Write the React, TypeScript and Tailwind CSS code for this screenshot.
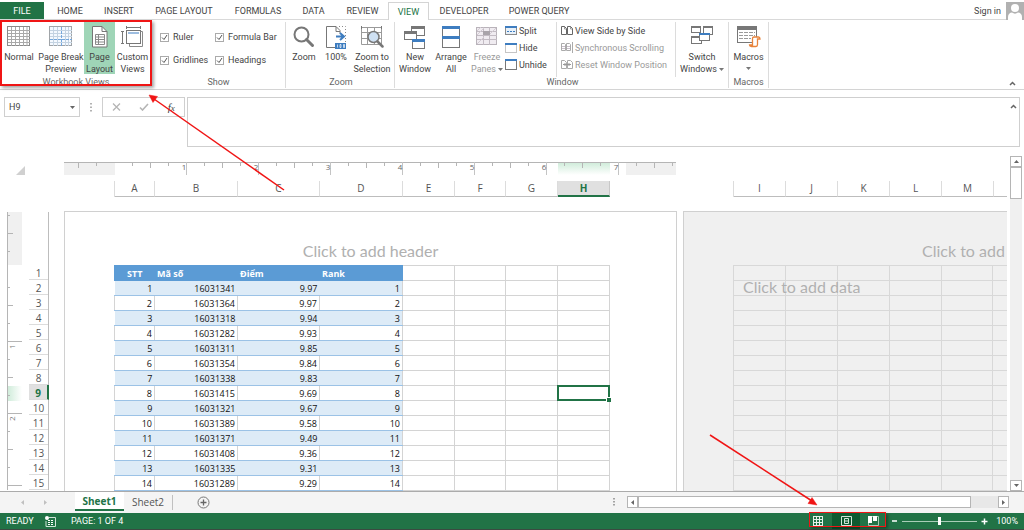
import React, { useState } from "react";
import type { ReactNode } from "react";

/* ---------- icons ---------- */

function Svg({ w, h, children }: { w: number; h: number; children: ReactNode }) {
  return (
    <svg width={w} height={h} viewBox={`0 0 ${w} ${h}`} fill="none" aria-hidden="true" className="shrink-0">
      {children}
    </svg>
  );
}

const NormalIcon = () => (
  <Svg w={24} h={22}>
    <rect x="0.5" y="0.5" width="22" height="19" fill="#fff" stroke="#8a8a8a" />
    <path d="M4.5 1v19M8.5 1v19M12.5 1v19M16.5 1v19M20 1v19M1 4.5h22M1 7.5h22M1 10.5h22M1 13.5h22M1 16.5h22" stroke="#a9a9a9" />
  </Svg>
);

const PageBreakIcon = () => (
  <Svg w={24} h={22}>
    <rect x="0.5" y="0.5" width="22" height="19" fill="#f4f9ff" stroke="#a0a4a8" />
    <path d="M4.5 1v19M8.5 1v19M16.5 1v19M19.5 1v19M1 4.5h22M1 7.5h22M1 10.5h22M1 16.5h22" stroke="#c4d3e2" />
    <path d="M12.5 1v19M1 13.5h22" stroke="#74a7dc" strokeDasharray="3 1" />
  </Svg>
);

const PageLayoutIcon = () => (
  <Svg w={18} h={22}>
    <path d="M1.500 0.500h9.500l5 5v15.500h-14.500z" fill="#fff" stroke="#777" />
    <path d="M11 0.500v5h5" stroke="#777" />
    <path d="M4.500 8.500h9v10h-9zM7.500 8.500v10M4.500 11h9M4.500 13.500h9M4.500 16h9" stroke="#8a8a8a" />
  </Svg>
);

const CustomViewsIcon = () => (
  <Svg w={24} h={22}>
    <path d="M5 1.500h15M5.500 0v3M19.500 0v3M1.500 5v13M0 5.500h3M0 17.500h3" stroke="#777" />
    <rect x="5.500" y="4.500" width="14" height="13" fill="#fff" stroke="#777" />
    <rect x="7" y="6" width="11" height="2" fill="#9dbde0" />
    <path d="M8.500 18v2.500h13v-15h-2" stroke="#8a8a8a" />
  </Svg>
);

const ZoomIcon = () => (
  <Svg w={24} h={22}>
    <circle cx="9.500" cy="8.500" r="7" stroke="#777" strokeWidth="2" fill="#fff" />
    <path d="M14.500 13.500l6 6" stroke="#777" strokeWidth="3" strokeLinecap="round" />
  </Svg>
);

const HundredIcon = () => (
  <Svg w={22} h={24}>
    <path d="M10 21.500H1.500V0.500h9.500l4 4v3" stroke="#777" />
    <path d="M11 0.500v5h4" stroke="#777" />
    <path d="M14 0.500h6.500v16" stroke="#8a8a8a" strokeDasharray="1 2" />
    <path d="M11 10.500h7M15 7l4 3.500-4 3.500" stroke="#3e7dc0" strokeWidth="2" />
    <rect x="10" y="17" width="11" height="6" fill="#3e7dc0" />
    <path d="M12.500 18.500v3M15 18.500h1v3h-1zM18.500 18.500h1v3h-1z" stroke="#fff" strokeWidth="0.700" />
  </Svg>
);

const ZoomSelectionIcon = () => (
  <Svg w={24} h={23}>
    <path d="M1.500 1.500h20v17h-20zM1 6.500h21M1 12.500h21M7.500 1v18M14.500 1v18" stroke="#9a9a9a" />
    <path d="M1.500 0v3M21.500 0v3" stroke="#777" />
    <circle cx="13.500" cy="11" r="5.500" fill="#cfe1f3" stroke="#777" strokeWidth="1.500" />
    <path d="M17.500 15.500l5 5" stroke="#777" strokeWidth="2.500" strokeLinecap="round" />
  </Svg>
);

const NewWindowIcon = () => (
  <Svg w={22} h={24}>
    <rect x="7.500" y="0.500" width="13" height="9" fill="#fff" stroke="#777" />
    <rect x="7" y="0" width="14" height="3" fill="#777" />
    <rect x="0.500" y="5.500" width="12" height="8" fill="#fff" stroke="#777" />
    <rect x="0" y="5" width="13" height="3" fill="#777" />
    <rect x="8.500" y="13.500" width="12" height="9" fill="#fff" stroke="#777" />
    <rect x="8" y="13" width="13" height="3" fill="#3e7dc0" />
  </Svg>
);

const ArrangeIcon = () => (
  <Svg w={20} h={23}>
    <rect x="1.500" y="0.500" width="17" height="21" fill="#fff" stroke="#777" />
    <rect x="1" y="0" width="18" height="3" fill="#3e7dc0" />
    <rect x="1" y="10" width="18" height="3" fill="#3e7dc0" />
  </Svg>
);

const FreezeIcon = () => (
  <Svg w={22} h={22}>
    <rect x="0.500" y="1.500" width="20" height="17" fill="#f0ecf1" stroke="#b9b3ba" />
    <path d="M1 5.500h20M1 9.500h20M1 13.500h20M7.500 1v18M13.500 1v18" stroke="#c3bcc4" />
    <path d="M1 9l7-7M1 5l4-4M13 9l7-7M1 18l7-7" stroke="#d3ccd4" />
    <rect x="7" y="5" width="7" height="4" fill="#a9a4aa" />
  </Svg>
);

const SwitchIcon = () => (
  <Svg w={22} h={20}>
    <rect x="0.500" y="0.500" width="9" height="6" fill="#fff" stroke="#777" />
    <rect x="0" y="0" width="10" height="2" fill="#777" />
    <rect x="12.500" y="0.500" width="9" height="8" fill="#fff" stroke="#777" />
    <rect x="12" y="0" width="10" height="2" fill="#777" />
    <rect x="0.500" y="10.500" width="10" height="7" fill="#fff" stroke="#777" />
    <rect x="0" y="10" width="11" height="2" fill="#777" />
    <rect x="8.500" y="7.500" width="10" height="7" fill="#fff" stroke="#777" />
    <rect x="8" y="7" width="11" height="2" fill="#3e7dc0" />
  </Svg>
);

const MacrosIcon = () => (
  <Svg w={24} h={22}>
    <rect x="0.500" y="0.500" width="19" height="16" fill="#fff" stroke="#777" />
    <rect x="0" y="0" width="20" height="4" fill="#777" />
    <path d="M2 6.500h16M2 9.500h16M2 12.500h12" stroke="#9a9a9a" strokeDasharray="4 1" />
    <path
      d="M15.500 19v-6.500c0-1 0.500-1.500 1.500-1.500h4.500c1 0 1.500 0.500 1.500 2h-2.500v5.500c0 1-0.500 2-1.500 2h-4.500c-1.500 0-2-0.500-2-1.500z"
      fill="#fff"
      stroke="#e8833a"
      strokeWidth="1.300"
    />
  </Svg>
);

const SplitIcon = () => (
  <Svg w={12} h={10}>
    <rect x="0.500" y="0.500" width="11" height="8" fill="#e7f0f9" stroke="#8a8a8a" />
    <rect width="12" height="2" fill="#3e7dc0" />
    <path d="M2 5.500h8" stroke="#3e7dc0" strokeDasharray="2 1" />
  </Svg>
);

const HideIcon = () => (
  <Svg w={12} h={10}>
    <rect x="0.500" y="0.500" width="11" height="9" stroke="#8a8a8a" strokeDasharray="1 1" />
    <rect width="12" height="2" fill="#3e7dc0" />
  </Svg>
);

const UnhideIcon = () => (
  <Svg w={12} h={11}>
    <rect x="0.500" y="0.500" width="11" height="10" fill="#fff" stroke="#777" />
    <rect width="12" height="2" fill="#3e7dc0" />
  </Svg>
);

const SideBySideIcon = () => (
  <Svg w={12} h={9}>
    <path d="M0.500 0.500h3l2 2v6h-5zM6.500 0.500h3l2 2v6h-5z" fill="#fff" stroke="#666" />
    <path d="M3.500 0v3h2M9.500 0v3h2" stroke="#777" strokeWidth="0.700" />
  </Svg>
);

const SyncScrollIcon = () => (
  <Svg w={12} h={11}>
    <path d="M0.500 1.500h3l1 1v6h-4zM5.500 1.500h3l1 1v6h-4zM11.500 0v11" stroke="#aaa" />
    <path d="M1 4.500h3M1 6.500h3M6 4.500h3M6 6.500h3" stroke="#c8bfca" />
  </Svg>
);

const ResetWindowIcon = () => (
  <Svg w={12} h={9}>
    <path d="M0.500 0.500h3l2 2v6h-5zM6.500 0.500h3l2 2v6h-5z" stroke="#aaa" />
    <path d="M2 4.500h8M4 3v3M8 3v3" stroke="#999" />
  </Svg>
);

const Caret = ({ className = "" }: { className?: string }) => (
  <svg width="5" height="3" viewBox="0 0 5 3" className={className} aria-hidden="true">
    <path d="M0 0h5L2.500 3z" fill="currentColor" />
  </svg>
);

/* ---------- ribbon ---------- */

const TABS = [
  { name: "HOME", width: "w-[52px]" },
  { name: "INSERT", width: "w-[46px]" },
  { name: "PAGE LAYOUT", width: "w-[84px]" },
  { name: "FORMULAS", width: "w-[64px]" },
  { name: "DATA", width: "w-[47px]" },
  { name: "REVIEW", width: "w-[51px]" },
  { name: "VIEW", width: "w-[41px]" },
  { name: "DEVELOPER", width: "w-[70px]" },
  { name: "POWER QUERY", width: "w-[80px]" },
];

function TabBar() {
  return (
    <nav className="flex h-5 items-stretch border-b border-[#d9d9d9] pt-[2px]">
      <button className="w-11 bg-[#217346] text-white">FILE</button>
      {TABS.map((t) => (
        <button
          key={t.name}
          className={`${t.width} whitespace-nowrap ${
            t.name === "VIEW" ? "-mb-px border border-b-0 border-[#d4d4d4] bg-white text-[#217346]" : ""
          }`}
        >
          {t.name}
        </button>
      ))}
      <div className="ml-auto flex items-center gap-[5px]">
        <button>Sign in</button>
        <svg width="18" height="18" viewBox="0 0 18 18" aria-hidden="true">
          <rect width="18" height="18" fill="#b1b1b1" />
          <circle cx="9" cy="6" r="4" fill="#fff" />
          <path d="M2 18v-3c0-3 2-4.500 4-4.500 2 1.500 4 1.500 6 0 2 0 4 1.500 4 4.500v3z" fill="#fff" />
        </svg>
      </div>
    </nav>
  );
}

function Group({ label, className, children }: { label: string; className: string; children: ReactNode }) {
  return (
    <section className={`relative flex shrink-0 flex-col ${className}`}>
      <div className="flex h-14">{children}</div>
      <div className="text-center leading-[11px] text-[#666]">{label}</div>
    </section>
  );
}

interface BigProps {
  icon: ReactNode;
  lines: string[];
  width: string;
  active?: boolean;
  disabled?: boolean;
  menu?: boolean;
}

function BigButton({ icon, lines, width, active, disabled, menu }: BigProps) {
  return (
    <button
      disabled={disabled}
      className={`flex h-[52px] shrink-0 flex-col items-center whitespace-nowrap pt-1 leading-3 ${width} ${
        active ? "bg-[#9fd5b7]" : ""
      } ${disabled ? "text-[#999]" : ""}`}
    >
      <span className="flex h-[25px] shrink-0 items-start">{icon}</span>
      {lines.map((line, i) => (
        <span key={line} className="flex items-center gap-[2px]">
          {line}
          {menu && i === lines.length - 1 && lines.length > 1 && <Caret className="text-[#777]" />}
        </span>
      ))}
      {menu && lines.length === 1 && <Caret className="mt-1 text-[#777]" />}
    </button>
  );
}

function SmallButton({ icon, label, disabled }: { icon: ReactNode; label: string; disabled?: boolean }) {
  return (
    <button
      disabled={disabled}
      className={`flex h-[17px] items-center gap-[2px] whitespace-nowrap ${disabled ? "text-[#999]" : ""}`}
    >
      {icon}
      {label}
    </button>
  );
}

function Check({ label }: { label: string }) {
  return (
    <label className="flex items-center gap-1 whitespace-nowrap">
      <span className="grid">
        <input
          type="checkbox"
          defaultChecked
          className="peer size-[9px] appearance-none border border-[#ababab] bg-white [grid-area:1/1]"
        />
        <svg
          width="9"
          height="9"
          viewBox="0 0 9 9"
          aria-hidden="true"
          className="pointer-events-none hidden [grid-area:1/1] peer-checked:block"
        >
          <path d="M2 4.500l2 2 3-4.500" fill="none" stroke="#555" />
        </svg>
      </span>
      {label}
    </label>
  );
}

function Ribbon() {
  return (
    <div className="flex h-[70px] border-b border-[#d4d4d4] pt-[2px] pb-px">
      <Group label="Workbook Views" className="w-[152px]">
        <BigButton icon={<NormalIcon />} lines={["Normal"]} width="w-[38px]" />
        <BigButton icon={<PageBreakIcon />} lines={["Page Break", "Preview"]} width="w-[46px]" />
        <BigButton icon={<PageLayoutIcon />} lines={["Page", "Layout"]} width="w-[31px]" active />
        <BigButton icon={<CustomViewsIcon />} lines={["Custom", "Views"]} width="w-[35px]" />
        <span className="pointer-events-none absolute -top-[2px] left-0 h-[66px] w-full border-2 border-[#f01515] shadow-[2px_2px_3px_rgba(0,0,0,0.35)]" />
      </Group>
      <Group label="Show" className="w-[134px] border-r border-[#dcdcdc]">
        <div className="grid grid-cols-[55px_auto] content-start gap-y-[11px] pt-[9px] pl-2 leading-3">
          <Check label="Ruler" />
          <Check label="Formula Bar" />
          <Check label="Gridlines" />
          <Check label="Headings" />
        </div>
      </Group>
      <Group label="Zoom" className="w-[109px] border-r border-[#dcdcdc] pl-[2px]">
        <BigButton icon={<ZoomIcon />} lines={["Zoom"]} width="w-8" />
        <BigButton icon={<HundredIcon />} lines={["100%"]} width="w-8" />
        <BigButton icon={<ZoomSelectionIcon />} lines={["Zoom to", "Selection"]} width="w-10" />
      </Group>
      <Group label="Window" className="w-[334px] border-r border-[#dcdcdc] pl-[2px]">
        <BigButton icon={<NewWindowIcon />} lines={["New", "Window"]} width="w-9" />
        <BigButton icon={<ArrangeIcon />} lines={["Arrange", "All"]} width="w-9" />
        <BigButton icon={<FreezeIcon />} lines={["Freeze", "Panes"]} width="w-9" disabled menu />
        <div className="flex w-[52px] flex-col border-r border-[#dcdcdc]">
          <SmallButton icon={<SplitIcon />} label="Split" />
          <SmallButton icon={<HideIcon />} label="Hide" />
          <SmallButton icon={<UnhideIcon />} label="Unhide" />
        </div>
        <div className="flex w-[119px] flex-col border-r border-[#dcdcdc] pl-1">
          <SmallButton icon={<SideBySideIcon />} label="View Side by Side" />
          <SmallButton icon={<SyncScrollIcon />} label="Synchronous Scrolling" disabled />
          <SmallButton icon={<ResetWindowIcon />} label="Reset Window Position" disabled />
        </div>
        <BigButton icon={<SwitchIcon />} lines={["Switch", "Windows"]} width="w-[52px]" menu />
      </Group>
      <Group label="Macros" className="w-10 border-r border-[#dcdcdc]">
        <BigButton icon={<MacrosIcon />} lines={["Macros"]} width="w-[39px]" menu />
      </Group>
      <button aria-label="Collapse ribbon" className="mr-2 mb-[2px] ml-auto self-end">
        <Svg w={7} h={5}>
          <path d="M1 4l2.500-2.500L6 4" stroke="#666" strokeWidth="1.500" />
        </Svg>
      </button>
    </div>
  );
}

/* ---------- formula bar ---------- */

function FormulaBar() {
  return (
    <div className="flex items-start pt-[7px] pr-1 pl-1">
      <div className="flex h-5 w-[76px] items-center border border-[#cfcfcf] pr-1">
        <input aria-label="Name box" defaultValue="H9" className="min-w-0 flex-1 pl-1 outline-none" />
        <button aria-label="Show names" className="text-[#666]">
          <Caret />
        </button>
      </div>
      <span className="flex h-5 w-[22px] items-center justify-center">
        <Svg w={2} h={9}>
          <path d="M1 0v9" stroke="#999" strokeWidth="1.500" strokeDasharray="1.500 2" />
        </Svg>
      </span>
      <div className="flex h-5 w-[83px] items-center justify-around border border-[#cfcfcf]">
        <button aria-label="Cancel">
          <Svg w={9} h={8}>
            <path d="M1 0.500l7 7M8 0.500l-7 7" stroke="#b5b5b5" strokeWidth="1.300" />
          </Svg>
        </button>
        <button aria-label="Enter">
          <Svg w={10} h={8}>
            <path d="M1 4.500l2.500 2.500L9 1" stroke="#b5b5b5" strokeWidth="1.600" />
          </Svg>
        </button>
        <button aria-label="Insert function" className="font-['Liberation_Serif',serif] text-[11px] text-[#444] italic">
          f<span className="text-[9px]">x</span>
        </button>
      </div>
      <div className="ml-[2px] flex h-[50px] flex-1 items-start border border-[#cfcfcf]">
        <textarea aria-label="Formula" className="h-full flex-1 resize-none px-1 outline-none" />
        <button aria-label="Collapse formula bar" className="mt-[6px] mr-[2px]">
          <Svg w={7} h={5}>
            <path d="M1 4l2.500-2.500L6 4" stroke="#666" strokeWidth="1.500" />
          </Svg>
        </button>
      </div>
    </div>
  );
}

/* ---------- worksheet ---------- */

const COLUMNS_1 = [
  { name: "A", width: "w-10" },
  { name: "B", width: "w-[83px]" },
  { name: "C", width: "w-[82px]" },
  { name: "D", width: "w-[83px]" },
  { name: "E", width: "w-[52px]" },
  { name: "F", width: "w-[51px]" },
  { name: "G", width: "w-[52px]" },
  { name: "H", width: "w-[52px]" },
];

const COLUMNS_2 = ["I", "J", "K", "L", "M"];

const RECORDS: [string, string][] = [
  ["16031341", "9.97"],
  ["16031364", "9.97"],
  ["16031318", "9.94"],
  ["16031282", "9.93"],
  ["16031311", "9.85"],
  ["16031354", "9.84"],
  ["16031338", "9.83"],
  ["16031415", "9.69"],
  ["16031321", "9.67"],
  ["16031389", "9.58"],
  ["16031371", "9.49"],
  ["16031408", "9.36"],
  ["16031335", "9.31"],
  ["16031289", "9.29"],
];

const ROW_NUMBERS = Array.from({ length: 15 }, (_, i) => i + 1);

function HorizontalRuler() {
  const ticks: ReactNode[] = [];
  for (let x = 15; x < 612; x += 18) {
    const steps = (x - 51) / 18;
    const inch = steps > 0 && steps % 4 === 0;
    const half = Math.abs(steps) % 2 === 0;
    if (steps === 0) continue;
    ticks.push(<path key={x} d={`M${x - 0.5} 0v${inch ? 13 : half ? 6 : 4}`} stroke={inch ? "#c4c4c4" : "#b5b5b5"} />);
  }
  return (
    <svg width="612" height="13" viewBox="0 0 612 13" aria-hidden="true" className="block shrink-0">
      <defs>
        <linearGradient id="hmark" x1="0" y1="0" x2="0" y2="1">
          <stop offset="0" stopColor="#cdebd8" />
          <stop offset="1" stopColor="#fff" />
        </linearGradient>
      </defs>
      <rect width="51" height="13" fill="#f0f0f0" />
      <rect x="562" width="50" height="13" fill="#f0f0f0" />
      <rect x="494" width="52" height="13" fill="url(#hmark)" />
      <path d="M0 0.500h612" stroke="#b5b5b5" />
      {ticks}
      {[1, 2, 3, 4, 5, 6, 7].map((n) => (
        <text key={n} x={48 + n * 72} y="8" fontSize="8" textAnchor="middle" fill="#666">
          {n}
        </text>
      ))}
    </svg>
  );
}

function VerticalRuler() {
  const ticks: ReactNode[] = [];
  for (let i = -3; i <= 12; i++) {
    if (i === 0) continue;
    const y = 57 + i * 18;
    const inch = i > 0 && i % 4 === 0;
    const len = inch ? 15 : Math.abs(i) % 2 === 0 ? 6 : 3;
    ticks.push(<path key={i} d={`M0 ${y + 0.5}h${len}`} stroke="#b5b5b5" />);
  }
  return (
    <svg width="15" height="278" viewBox="0 0 15 278" aria-hidden="true" className="block">
      <defs>
        <linearGradient id="vmark">
          <stop offset="0" stopColor="#cdebd8" />
          <stop offset="1" stopColor="#fff" />
        </linearGradient>
      </defs>
      <rect width="15" height="53" fill="#f0f0f0" />
      <rect y="174" width="15" height="15" fill="url(#vmark)" />
      <path d="M0.500 0v278" stroke="#b5b5b5" />
      {ticks}
      <text transform="translate(8 137) rotate(-90)" fontSize="8" fill="#777">1</text>
      <text transform="translate(8 209) rotate(-90)" fontSize="8" fill="#777">2</text>
    </svg>
  );
}

function ColumnHead({ name, width, active }: { name: string; width: string; active?: boolean }) {
  return (
    <div
      className={`h-4 shrink-0 border-r text-center text-[10px] leading-[15px] ${width} ${
        active
          ? "border-b-2 border-r-[#c8c8c8] border-b-[#217346] bg-[#e0e0e0] font-bold text-[#217346]"
          : "border-b border-r-[#dcdcdc] border-b-[#bdbdbd] text-[#555]"
      }`}
    >
      {name}
    </div>
  );
}

function DataSheet() {
  return (
    <table className="w-[495px] table-fixed border-collapse text-[#111]">
      <colgroup>
        {COLUMNS_1.map((c) => (
          <col key={c.name} className={c.width} />
        ))}
      </colgroup>
      <thead>
        <tr className="h-[15px] text-left leading-3 text-white">
          <th className="border border-[#5b9bd5] bg-[#5b9bd5] p-0 pt-[2px] pl-3">STT</th>
          <th className="border border-[#5b9bd5] bg-[#5b9bd5] p-0 pt-[2px] pl-[2px]">Mã số</th>
          <th className="border border-[#5b9bd5] bg-[#5b9bd5] p-0 pt-[2px] pl-[2px]">Điểm</th>
          <th className="border border-[#5b9bd5] bg-[#5b9bd5] p-0 pt-[2px] pl-[2px]">Rank</th>
          {[0, 1, 2, 3].map((k) => (
            <td key={k} className="border border-[#d4d4d4] p-0" />
          ))}
        </tr>
      </thead>
      <tbody>
        {RECORDS.map(([code, score], i) => {
          const cell =
            i % 2 === 0
              ? "border-y border-[#9bc2e6] bg-[#ddebf7] p-0 pt-[2px] pr-[2px]"
              : "border-x border-y border-x-[#d4d4d4] border-y-[#9bc2e6] p-0 pt-[2px] pr-[2px]";
          return (
            <tr key={code} className="h-[15px] text-right leading-3">
              <td className={cell}>{i + 1}</td>
              <td className={cell}>{code}</td>
              <td className={cell}>{score}</td>
              <td className={cell}>{i + 1}</td>
              {[0, 1, 2, 3].map((k) => (
                <td key={k} className="relative border border-[#d4d4d4] p-0">
                  {k === 3 && i === 7 && (
                    <span className="absolute -inset-px border-2 border-[#217346]">
                      <span className="absolute -right-[3px] -bottom-[3px] size-[5px] border-t border-l border-white bg-[#217346]" />
                    </span>
                  )}
                </td>
              ))}
            </tr>
          );
        })}
      </tbody>
    </table>
  );
}

const PLACEHOLDER = "font-['Lato','Noto_Sans',sans-serif] text-base leading-5 text-[#b0b0b0]";

function Worksheet() {
  return (
    <main className="flex flex-1 font-['Open_Sans','Noto_Sans',sans-serif]">
      <div className="w-16 shrink-0">
        <div className="flex h-[65px] items-start pt-[19px] pl-4">
          <button aria-label="Select all">
            <Svg w={9} h={9}>
              <path d="M9 0v9H0z" fill="#d0d0d0" />
            </Svg>
          </button>
        </div>
        <div className="flex pl-[7px]">
          <VerticalRuler />
          <div className="ml-[7px] w-5 border-r border-[#bdbdbd] pt-[53px]">
            {ROW_NUMBERS.map((n) => (
              <div
                key={n}
                className={`h-[15px] border-b border-[#dcdcdc] text-center text-[10px] leading-[17px] ${
                  n === 9 ? "-mr-px border-r-2 border-r-[#217346] bg-[#e0e0e0] font-bold text-[#217346]" : "text-[#555]"
                }`}
              >
                {n}
              </div>
            ))}
          </div>
        </div>
      </div>

      <div className="flex min-w-0 flex-1 flex-col overflow-hidden pt-[15px]">
        <HorizontalRuler />
        <div className="mt-[6px] flex pl-[50px]">
          <div className="flex border-l border-[#dcdcdc]">
            {COLUMNS_1.map((c) => (
              <ColumnHead key={c.name} name={c.name} width={c.width} active={c.name === "H"} />
            ))}
          </div>
          <div className="ml-[123px] flex flex-1 border-l border-[#dcdcdc]">
            {COLUMNS_2.map((c) => (
              <ColumnHead key={c} name={c} width="w-[52px]" />
            ))}
            <div className="flex-1 border-b border-[#bdbdbd]" />
          </div>
        </div>

        <div className="mt-[14px] flex flex-1 gap-[6px]">
          <div className="w-[613px] shrink-0 border border-b-0 border-[#d0d0d0] bg-white">
            <div className={`flex h-[53px] items-end justify-center pb-1 ${PLACEHOLDER}`}>Click to add header</div>
            <div className="pl-[49px]">
              <DataSheet />
            </div>
          </div>
          <div className="w-[613px] shrink-0 border border-b-0 border-[#d0d0d0] bg-[#f0f0f0]">
            <div className={`flex h-[53px] items-end pb-1 pl-[238px] ${PLACEHOLDER}`}>Click to add</div>
            <div className="relative pl-[49px]">
              <table className="w-[520px] table-fixed border-collapse">
                <tbody>
                  {ROW_NUMBERS.map((n) => (
                    <tr key={n} className="h-[15px]">
                      {Array.from({ length: 10 }, (_, k) => (
                        <td key={k} className="border border-[#d8d8d8] p-0" />
                      ))}
                    </tr>
                  ))}
                </tbody>
              </table>
              <span className={`absolute top-3 left-[59px] ${PLACEHOLDER}`}>Click to add data</span>
            </div>
          </div>
        </div>
      </div>

      <div className="flex w-[17px] shrink-0 flex-col pt-[9px] pr-[2px] pl-[3px]">
        <button aria-label="Scroll up" className="flex h-[11px] items-center justify-center border border-[#b5b5b5] bg-white text-[#666]">
          <Caret className="rotate-180" />
        </button>
        <div className="h-8 border border-[#b5b5b5] bg-white" />
        <div className="flex-1 bg-[#f0f0f0]" />
        <button aria-label="Scroll down" className="flex h-[11px] items-center justify-center border border-[#b5b5b5] bg-white text-[#666]">
          <Caret />
        </button>
      </div>
    </main>
  );
}

function SheetTabs() {
  return (
    <div className="flex h-[22px] items-start border-t border-[#ababab] bg-[#f4f4f4] font-['Open_Sans','Noto_Sans',sans-serif] text-[10px]">
      <div className="flex h-5 w-[75px] items-center gap-[18px] pl-5 text-[#c0c0c0]">
        <button aria-label="Previous sheet">
          <Caret className="rotate-90" />
        </button>
        <button aria-label="Next sheet">
          <Caret className="-rotate-90" />
        </button>
      </div>
      <button className="h-[19px] w-[49px] border-b-2 border-[#217346] bg-white pt-px leading-4 font-bold text-[#217346]">
        Sheet1
      </button>
      <button className="h-[19px] w-12 leading-[18px] text-[#555]">Sheet2</button>
      <span className="mt-[3px] h-[15px] w-px bg-[#c0c0c0]" />
      <button aria-label="New sheet" className="mt-1 ml-6">
        <Svg w={13} h={13}>
          <circle cx="6.500" cy="6.500" r="5.500" stroke="#777" />
          <path d="M6.500 3.500v6M3.500 6.500h6" stroke="#666" strokeWidth="1.300" />
        </Svg>
      </button>
      <div className="mt-1 mr-[15px] ml-auto flex items-center gap-3">
        <Svg w={2} h={11}>
          <path d="M1 1v9" stroke="#888" strokeWidth="1.500" strokeDasharray="1.500 1.500" />
        </Svg>
        <div className="flex h-3 w-[382px] bg-[#e8e8e8]">
          <button aria-label="Scroll left" className="flex w-[11px] items-center justify-center border border-[#b5b5b5] bg-white text-[#666]">
            <Caret className="rotate-90" />
          </button>
          <div className="w-[333px] border border-[#b5b5b5] bg-white" />
          <button aria-label="Scroll right" className="ml-auto flex w-[11px] items-center justify-center border border-[#b5b5b5] bg-white text-[#666]">
            <Caret className="-rotate-90" />
          </button>
        </div>
      </div>
    </div>
  );
}

function StatusBar() {
  const [zoom, setZoom] = useState(50);
  return (
    <footer className="flex h-[18px] items-center border-b-2 border-[#3b4a41] bg-[#217346] pr-[6px] pl-[6px] text-white">
      <span className="w-[39px]">READY</span>
      <button aria-label="Record macro" className="w-[26px]">
        <Svg w={11} h={11}>
          <path d="M4 1.500h6.500v9h-9.500v-5.500" stroke="#cfe3d7" />
          <path d="M3 4.500h6M3 6.500h6M3 8.500h6" stroke="#fff" strokeDasharray="2 1" />
          <circle cx="2" cy="2" r="2" fill="#fff" />
        </Svg>
      </button>
      <span>PAGE: 1 OF 4</span>
      <div className="relative ml-auto flex h-4 w-[77px] items-center">
        <button aria-label="Normal view" className="flex h-full w-[23px] items-center pl-1">
          <Svg w={10} h={10}>
            <path d="M0.500 0v10M3.500 0v10M6.500 0v10M9.500 0v10M0 0.500h10M0 3.500h10M0 6.500h10M0 9.500h10" stroke="#e6f1ea" />
          </Svg>
        </button>
        <button aria-label="Page layout view" className="flex h-full w-7 items-center justify-center bg-[#0e5a30]">
          <Svg w={11} h={10}>
            <path d="M0.500 0.500h10v9h-10zM3.500 2.500h4v5h-4zM4 5h3" stroke="#d5e6db" />
          </Svg>
        </button>
        <button aria-label="Page break preview" className="flex h-full flex-1 items-center justify-center">
          <Svg w={11} h={10}>
            <path d="M0.500 0.500h10v9h-10z" stroke="#a9cdb8" />
            <path d="M0 0h4v7h-4zM5 0h4v5h-4z" fill="#fff" />
          </Svg>
        </button>
        <span className="pointer-events-none absolute inset-x-0 -top-px h-[15px] border border-[#f01515] shadow-[2px_2px_3px_rgba(0,0,0,0.35)]" />
      </div>
      <div className="ml-[6px] flex items-center gap-1">
        <button aria-label="Zoom out">
          <Svg w={6} h={6}>
            <path d="M0 3h5" stroke="#fff" strokeWidth="1.500" />
          </Svg>
        </button>
        <input
          type="range"
          aria-label="Zoom"
          value={zoom}
          onChange={(e) => setZoom(Number(e.target.value))}
          className="h-2 w-[75px] appearance-none bg-transparent [&::-webkit-slider-runnable-track]:h-px [&::-webkit-slider-runnable-track]:bg-[#a9cdb8] [&::-webkit-slider-thumb]:-mt-1 [&::-webkit-slider-thumb]:h-2 [&::-webkit-slider-thumb]:w-[3px] [&::-webkit-slider-thumb]:appearance-none [&::-webkit-slider-thumb]:bg-white"
        />
        <button aria-label="Zoom in">
          <Svg w={7} h={7}>
            <path d="M0.500 3.500h6M3.500 0.500v6" stroke="#fff" strokeWidth="1.500" />
          </Svg>
        </button>
      </div>
      <span className="ml-2">100%</span>
    </footer>
  );
}

function Arrows() {
  return (
    <svg width="1024" height="530" viewBox="0 0 1024 530" aria-hidden="true" className="pointer-events-none absolute top-0 left-0">
      <g stroke="#f01515" strokeWidth="1.500" fill="#f01515">
        <path d="M284 190L154 99" />
        <path d="M149 95l8.500 1.500-4.500 6z" strokeWidth="0.500" />
        <path d="M710 435L812 501" />
        <path d="M817 505l-9-1.500 4-6z" strokeWidth="0.500" />
      </g>
    </svg>
  );
}

export default function App() {
  return (
    <div className="relative flex min-h-screen flex-col overflow-hidden bg-white font-['Roboto','Noto_Sans',sans-serif] text-[9px] leading-3 text-[#444]">
      <TabBar />
      <Ribbon />
      <FormulaBar />
      <Worksheet />
      <SheetTabs />
      <StatusBar />
      <Arrows />
    </div>
  );
}
